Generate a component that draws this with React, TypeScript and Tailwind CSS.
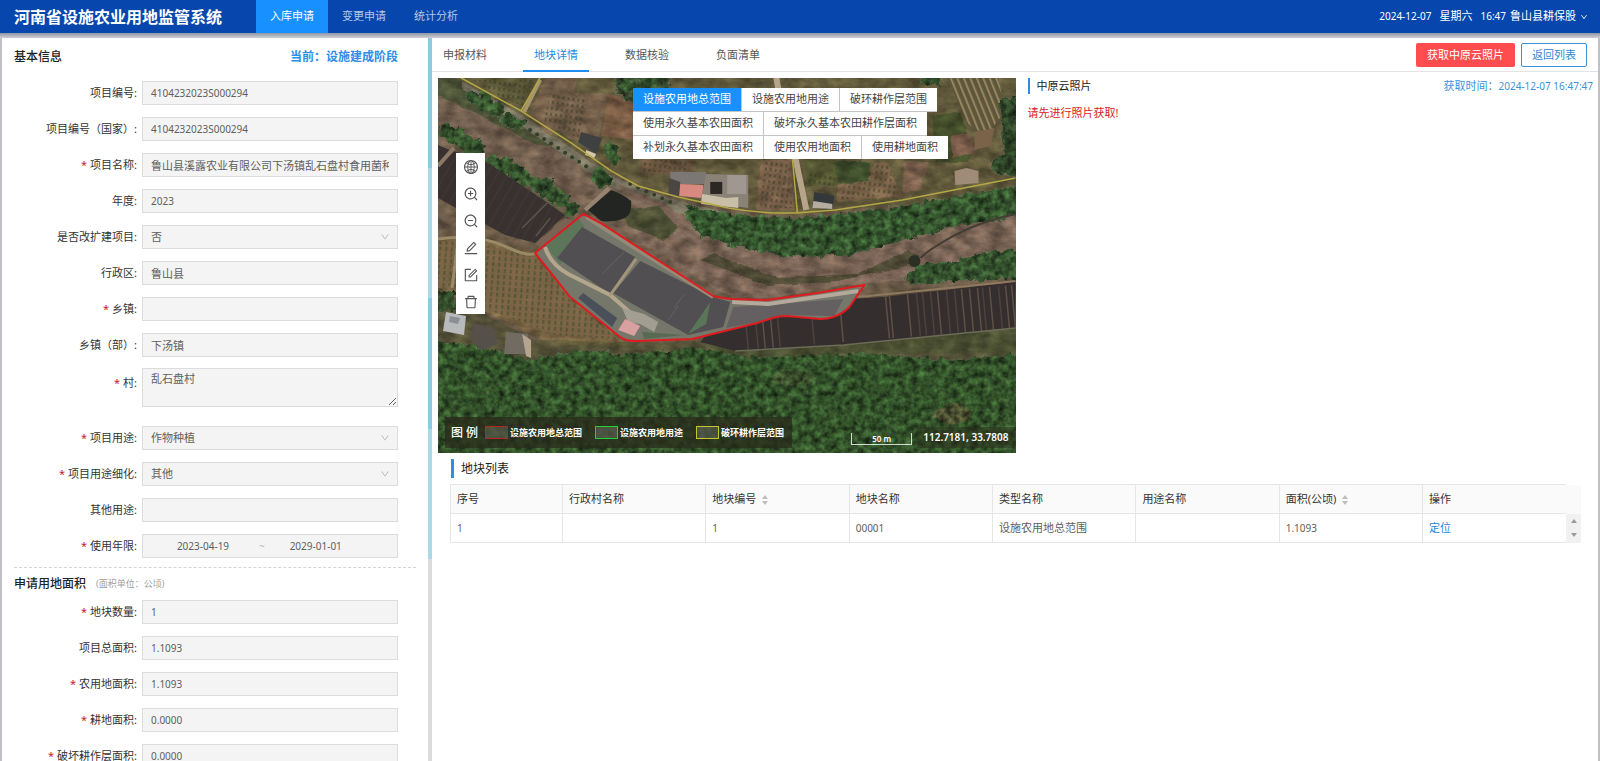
import React, { useId } from "react";
import {
  AiOutlineDelete,
  AiOutlineDown,
  AiOutlineEdit,
  AiOutlineForm,
  AiOutlineGlobal,
  AiOutlineZoomIn,
  AiOutlineZoomOut,
} from "react-icons/ai";

type FieldKind = "text" | "select" | "textarea";

interface FieldDef {
  label: string;
  value: string;
  required?: boolean;
  kind?: FieldKind;
  numeric?: boolean;
}

const basicFields: FieldDef[] = [
  { label: "项目编号", value: "4104232023S000294", numeric: true },
  { label: "项目编号（国家）", value: "4104232023S000294", numeric: true },
  { label: "项目名称", value: "鲁山县溪露农业有限公司下汤镇乱石盘村食用菌种植项目", required: true },
  { label: "年度", value: "2023", numeric: true },
  { label: "是否改扩建项目", value: "否", kind: "select" },
  { label: "行政区", value: "鲁山县" },
  { label: "乡镇", value: "", required: true },
  { label: "乡镇（部）", value: "下汤镇" },
];

const usageFields: FieldDef[] = [
  { label: "项目用途", value: "作物种植", required: true, kind: "select" },
  { label: "项目用途细化", value: "其他", required: true, kind: "select" },
  { label: "其他用途", value: "" },
];

const areaFields: FieldDef[] = [
  { label: "地块数量", value: "1", required: true, numeric: true },
  { label: "项目总面积", value: "1.1093", numeric: true },
  { label: "农用地面积", value: "1.1093", required: true, numeric: true },
  { label: "耕地面积", value: "0.0000", required: true, numeric: true },
  { label: "破坏耕作层面积", value: "0.0000", required: true, numeric: true },
];

function FieldLabel({ id, label, required }: { id: string; label: string; required?: boolean }) {
  return (
    <label htmlFor={id} className="w-[140px] shrink-0 pr-[5px] text-right text-[11px] leading-6 text-[#333]">
      {required && <span className="mr-[3px] text-[#c8202f]">*</span>}
      {label}:
    </label>
  );
}

function Field({ label, value, required, kind = "text", numeric }: FieldDef) {
  const id = useId();
  const size = numeric ? "text-[10px]" : "text-[11px]";
  const box = "w-full rounded-none border border-[#dcdcdc] bg-[#f4f4f4] px-2 text-[#606060] outline-none";
  return (
    <div className={kind === "textarea" ? "flex items-start" : "flex items-center"}>
      <div className={kind === "textarea" ? "flex pt-[3px]" : "flex"}>
        <FieldLabel id={id} label={label} required={required} />
      </div>
      <div className="relative flex min-w-0 flex-1">
        {kind === "text" && <input id={id} readOnly defaultValue={value} className={`${box} h-6 ${size}`} />}
        {kind === "textarea" && (
          <textarea id={id} readOnly defaultValue={value} className={`${box} h-[39px] resize py-0.5 leading-4 ${size}`} />
        )}
        {kind === "select" && (
          <>
            <select id={id} defaultValue={value} className={`${box} h-6 appearance-none ${size}`}>
              <option>{value}</option>
            </select>
            <AiOutlineDown className="pointer-events-none absolute top-[7px] right-2 size-[10px] text-[#b0b0b0]" />
          </>
        )}
      </div>
    </div>
  );
}

function DateRange() {
  return (
    <div className="flex items-center">
      <FieldLabel id="range-start" label="使用年限" required />
      <div className="flex h-6 min-w-0 flex-1 items-center border border-[#dcdcdc] bg-[#f4f4f4] text-[10px] text-[#606060]">
        <input id="range-start" readOnly defaultValue="2023-04-19" className="ml-1 w-28 bg-transparent text-center outline-none" />
        <span className="text-[#bbb]">~</span>
        <input aria-label="结束日期" readOnly defaultValue="2029-01-01" className="w-[102px] min-w-0 bg-transparent text-center outline-none" />
      </div>
    </div>
  );
}

function Header() {
  return (
    <header className="flex h-[33px] shrink-0 items-center bg-[#0747ad] pr-3 pl-[14px] text-white">
      <h1 className="w-[242px] text-[16px] leading-8 font-bold">河南省设施农业用地监管系统</h1>
      <nav className="flex h-full text-[11px]">
        <a href="#in" className="flex items-center bg-[#1890ff] px-3.5">入库申请</a>
        <a href="#change" className="flex items-center px-3.5 text-[#b4c8e6]">变更申请</a>
        <a href="#stat" className="flex items-center px-3.5 text-[#b4c8e6]">统计分析</a>
      </nav>
      <div className="ml-auto flex items-center text-[10px]">
        <span>2024-12-07</span>
        <span className="ml-2 text-[11px]">星期六</span>
        <span className="ml-2">16:47</span>
        <button className="ml-1 flex items-center gap-1 text-[11px]">
          鲁山县耕保股
          <AiOutlineDown className="size-2" />
        </button>
      </div>
    </header>
  );
}

function Sidebar() {
  return (
    <aside className="w-[426px] shrink-0 overflow-hidden bg-white">
      <div className="flex items-center justify-between pt-[9px] pr-[30px] pl-3 leading-5">
        <h2 className="text-[12px] font-medium text-[#222]">基本信息</h2>
        <span className="text-[12px] font-bold text-[#2d8ee8]">当前：设施建成阶段</span>
      </div>
      <form className="pt-[14px]">
        <div className="flex flex-col gap-3 pr-[30px]">
          {basicFields.map((f) => (
            <Field key={f.label} {...f} />
          ))}
        </div>
        <div className="pt-[11px] pr-[30px] pb-[19px]">
          <Field label="村" value="乱石盘村" required kind="textarea" />
        </div>
        <div className="flex flex-col gap-3 pr-[30px]">
          {usageFields.map((f) => (
            <Field key={f.label} {...f} />
          ))}
          <DateRange />
        </div>
        <div className="mt-[9px] mr-3 ml-3 border-t border-dashed border-[#d5d5d5]" />
        <div className="flex items-center gap-2.5 pt-[5px] pb-[5px] pl-3 leading-[22px]">
          <h2 className="text-[12px] font-medium text-[#222]">申请用地面积</h2>
          <span className="text-[9px] text-[#a0a0a0]">(面积单位：公顷)</span>
        </div>
        <div className="flex flex-col gap-3 pr-[30px]">
          {areaFields.map((f) => (
            <Field key={f.label} {...f} />
          ))}
        </div>
      </form>
    </aside>
  );
}

function Splitter() {
  return (
    <div className="flex w-1 shrink-0 flex-col bg-[#dcdcdc]">
      <div className="h-[130px] bg-[#8fcae2]" />
      <div className="h-[130px] bg-[#add8e6]" />
      <div className="h-[131px] bg-[#8fcae2]" />
      <div className="h-[130px] bg-[#add8e6]" />
    </div>
  );
}

const tabs = ["申报材料", "地块详情", "数据核验", "负面清单"];

function TabBar() {
  return (
    <div className="flex h-[34px] items-stretch border-b border-[#e3e3e3]">
      <div role="tablist" className="flex gap-[25px] text-[11px]">
        {tabs.map((t, i) => (
          <button
            key={t}
            role="tab"
            aria-selected={i === 1}
            className={
              i === 1
                ? "-mb-px border-b-2 border-[#1f8ef0] px-[11px] pt-[3px] text-[#2189e5]"
                : "-mb-px border-b-2 border-transparent px-[11px] pt-[3px] text-[#555]"
            }
          >
            {t}
          </button>
        ))}
      </div>
      <div className="ml-auto flex items-center gap-1.5 pt-px pr-[11px] text-[11px]">
        <button className="h-6 rounded-[2px] bg-[#ff4d4f] px-[11px] text-white">获取中原云照片</button>
        <button className="h-6 rounded-[2px] border border-[#3a8fd8] px-[10px] text-[#2f86d0]">返回列表</button>
      </div>
    </div>
  );
}

const siteOutline =
  "M145 136 L164 146 L275 218 Q282 220 294 221 L329 222 L379 215 L426 207 L411 229 Q404 236 395 239 Q389 241 382 241 L349 238 Q341 238 334 240 L319 245 L262 259 L254 261 L199 263 Q188 263 182 259 L132 219 L97 175 Z";

const greenhouseStripes = [
  306, 316, 323, 331, 338, 372, 401, 447, 451, 469, 478, 484, 492, 499, 508, 516, 523, 531, 539, 544, 551, 560, 567, 573,
];

function TreeLine({ points, r }: { points: number[][]; r: number }) {
  return (
    <g filter="url(#foliage)">
      {points.map(([x, y], i) => (
        <circle key={i} cx={x} cy={y} r={r + ((i * 7) % 4)} fill={i % 3 ? "#3a5a31" : "#304c2a"} />
      ))}
    </g>
  );
}

function SatelliteImage() {
  return (
    <svg
      viewBox="0 0 577 375"
      preserveAspectRatio="xMidYMid slice"
      className="absolute inset-0 size-full"
      role="img"
      aria-label="地块卫星影像"
    >
      <defs>
        <filter id="foliage" x="-5%" y="-5%" width="110%" height="110%" colorInterpolationFilters="sRGB">
          <feTurbulence type="fractalNoise" baseFrequency="0.15" numOctaves="3" seed="8" result="n" />
          <feDisplacementMap in="SourceGraphic" in2="n" scale="10" xChannelSelector="R" yChannelSelector="G" result="d" />
          <feColorMatrix in="n" values="0.8 0 0 0 0.08  0.8 0 0 0 0.08  0.8 0 0 0 0.08  0 0 0 0 1" result="g" />
          <feBlend in="g" in2="d" mode="overlay" result="b" />
          <feComposite in="b" in2="d" operator="in" />
        </filter>
        <filter id="soil" x="0" y="0" width="100%" height="100%" colorInterpolationFilters="sRGB">
          <feTurbulence type="fractalNoise" baseFrequency="0.06 0.1" numOctaves="5" seed="3" result="n" />
          <feDisplacementMap in="SourceGraphic" in2="n" scale="4" xChannelSelector="R" yChannelSelector="G" result="d" />
          <feColorMatrix in="n" values="0.4 0 0 0 0.29  0.4 0 0 0 0.29  0.4 0 0 0 0.29  0 0 0 0 1" result="g" />
          <feBlend in="g" in2="d" mode="overlay" result="b" />
          <feComposite in="b" in2="d" operator="in" />
        </filter>
        <pattern id="crop" width="5" height="6" patternUnits="userSpaceOnUse" patternTransform="rotate(8)">
          <rect x="1" y="1" width="2" height="3" fill="#2f3b1e" opacity=".55" />
        </pattern>
        <pattern id="orchard" width="6" height="6" patternUnits="userSpaceOnUse" patternTransform="rotate(4)">
          <rect width="6" height="6" fill="#7d6547" />
          <rect x="1" width="2" height="4" fill="#4f5430" />
        </pattern>
        <pattern id="rows" width="6" height="5" patternUnits="userSpaceOnUse" patternTransform="rotate(-22)">
          <rect width="6" height="5" fill="#5e5638" />
          <rect x="0" width="2" height="5" fill="#958563" />
        </pattern>
        <pattern id="shed" width="9" height="9" patternUnits="userSpaceOnUse" patternTransform="rotate(30)">
          <rect width="9" height="9" fill="#383130" />
          <rect width="1" height="9" fill="#403937" />
        </pattern>
      </defs>

      <g filter="url(#soil)">
        <rect x="-10" y="-10" width="600" height="400" fill="#6a5a47" />
        <path d="M-10 -10H590V118L464 126L357 138L240 122L173 96L83 38L20 0Z" fill="#625a3c" />
        <path d="M32 -10H98V0L82 30Z" fill="#5b5839" />
        <path d="M112 -10H142L128 44L110 60L92 36Z" fill="#735e49" />
        <path d="M113 15L170 16L160 62L134 62L105 42Z" fill="#75604b" />
        <path d="M170 16L194 22L196 62L163 58Z" fill="#7c5e46" />
        <path d="M205 82L252 80L256 96L200 96Z" fill="#6b5540" />
        <path d="M323 82L352 82L356 132L318 132Z" fill="#7a604b" />
        <path d="M366 82H405V108H370Z" fill="#545632" />
        <path d="M396 84H432L430 102L400 106Z" fill="#3f4f2c" />
        <path d="M436 84L450 86L463 118L398 124L399 108L430 102Z" fill="#7b6349" />
        <path d="M466 84H490L482 112L464 116Z" fill="#7b604d" />
        <path d="M494 38L520 34L536 68L530 84L496 84Z" fill="#46502c" />
        <path d="M512 58L532 54L536 74L514 80Z" fill="#765948" />
        <path d="M-8 16Q34 22 62 44L140 84L166 104L212 124L250 142L284 184L262 210L180 160L140 130L90 100L40 66L-8 42Z" fill="#73604f" />
        <path d="M-8 -8L20 0L60 30L120 70L96 66L40 36L-8 14Z" fill="#4c5236" />
        <path d="M24 4L82 37L132 69L172 98L240 124L290 134L240 136L176 110L130 80L78 44L22 10Z" fill="#77725f" />
        <path d="M180 106L226 126L276 156L345 179L409 177L475 159L590 132V178L512 192L465 202L405 207L329 221L290 218L200 162Z" fill="#7b6556" />
        <path d="M262 182L330 208L400 203L468 188L482 178L470 172L420 196L340 200L276 176Z" fill="#514d37" />
        <path d="M184 132L220 128L240 150L226 162L190 148Z" fill="#4f5236" />
        <path d="M-8 159L39 160L95 174L132 219L182 259L190 268L120 268L49 235L-8 212Z" fill="#7a6544" />
        <path d="M262 262L400 268L590 242V275L420 276L290 280Z" fill="#515637" />
        <path d="M-8 205L50 238L96 262L190 264L590 256V290H-8Z" fill="#4a4e31" opacity=".6" />
      </g>

      <path d="M34 2H96L84 28L60 18Z M112 16L150 18L140 60L106 44Z M324 84H350L354 130H322Z M438 86L450 88L460 116L400 122L402 110L432 102Z M206 82H250V94H204Z M368 96H396V108H370Z M4 168H20V208H4Z" fill="url(#crop)" />
      <path d="M0 163L16 162L12 208L0 210Z M20 163L96 177L131 221L180 261L120 257L50 232L14 208Z" fill="url(#orchard)" opacity=".85" />
      <path d="M508 0H560L566 34L548 58L530 46Z" fill="url(#rows)" />
      <path d="M536 54L556 50L552 68L536 72Z" fill="#7b6349" />
      <path d="M14 210L20 162M0 161Q40 156 66 168T97 175" fill="none" stroke="#9b8a66" strokeWidth="3" />

      {/* northern woodland belt */}
      <g filter="url(#foliage)">
        <path d="M246 126L290 136L357 140L400 136L464 128L590 106V136L520 148L475 160L409 177L345 179L290 166L262 158L250 142Z" fill="#36572f" />
        <path d="M466 200L480 186L512 184L545 174L590 170V200L520 204L470 206Z" fill="#36552f" />
        <path d="M176 -10H232V22L200 26L180 18Z" fill="#37492d" />
        <path d="M482 -10H508L500 8L484 6Z M560 20H590V100L558 96L552 84L566 76Z" fill="#2f4528" />
      </g>
      <TreeLine points={[[8, 52], [18, 58], [28, 66], [38, 70], [54, 84], [66, 88], [78, 96], [86, 100], [98, 106], [108, 110], [116, 118], [124, 122], [134, 130]]} r={7} />
      <TreeLine points={[[34, 20], [46, 24], [58, 32], [72, 42], [82, 46], [162, 98], [166, 102], [172, 72], [176, 80], [212, 0], [190, 8]]} r={6} />
      <g fill="#333f27">
        {[92, 99, 106, 113, 120, 127, 134, 141, 148, 192, 200, 208, 216, 224, 232].map((x) => (
          <circle key={x} cx={x} cy={x < 160 ? 52 + (x - 92) * 0.65 : 106 + (x - 192) * 0.45} r="2" />
        ))}
      </g>

      {/* southern hillside forest */}
      <g filter="url(#foliage)">
        <path d="M-10 262L40 268L92 282L140 272L192 276L262 270L312 279L429 276L520 282L600 272V400H-10Z" fill="#34542b" />
        <path d="M-10 212L16 214L20 232L-10 236Z" fill="#344d2b" />
        <ellipse cx="514" cy="336" rx="18" ry="10" fill="#4f5433" />
        <ellipse cx="355" cy="300" rx="22" ry="8" fill="#40552f" />
      </g>

      {/* upper-left greenhouses */}
      <path d="M0 67L12 72L47 83L107 123L127 137L97 165L67 157L0 120Z" fill="url(#shed)" />
      <path d="M0 88L16 70" stroke="#8c7a66" strokeWidth="4" fill="none" />
      <path d="M84 150L110 124M98 158L112 140" stroke="#5f544d" strokeWidth="1.5" fill="none" />
      <path d="M97 166L127 140L136 144L104 170Z" fill="#7a6254" />

      <path d="M173 112Q184 116 193 123Q194 136 187 140Q174 145 163 143L150 132Z" fill="#222522" />
      <path d="M147 132L171 110" stroke="#95846f" strokeWidth="4" />

      {/* right-hand greenhouse rows */}
      <path d="M292 229L330 226L445 219L577 204V250L405 267L297 273L262 264Z" fill="#352e2f" />
      {greenhouseStripes.map((x) => (
        <path
          key={x}
          d={`M${x} ${229 - (x - 300) * 0.08}L${x + 4} ${272 - (x - 300) * 0.08}`}
          stroke={x % 2 ? "#5f5044" : "#4d423d"}
          strokeWidth="1.5"
        />
      ))}
      <path d="M294 226L430 218L510 210L577 203" stroke="#8f7a60" strokeWidth="2" fill="none" />
      <path d="M297 273L405 267L577 250" stroke="#6c6b56" strokeWidth="1.5" fill="none" />

      {/* buildings */}
      <path d="M232 94H268V106H232Z" fill="#7b7774" />
      <path d="M231 100L242 104V119H230Z" fill="#4b4643" />
      <path d="M242 106L265 107L264 120L241 118Z" fill="#d98a80" />
      <path d="M268 96L310 97V130L262 124Z" fill="#8a8177" />
      <path d="M272 104H284V116H272Z" fill="#2a2725" />
      <path d="M289 97H308V116H289Z" fill="#a09890" />
      <path d="M264 116L288 120L300 119V130L263 126Z" fill="#c9bfa9" />
      <path d="M143 54L164 60L158 76L140 64Z" fill="#3f4042" />
      <path d="M148 72L158 76L156 80L147 77Z" fill="#d3c7b2" />
      <path d="M376 114L396 118L394 132L374 128Z" fill="#34383a" />
      <path d="M375 123L394 126V131L374 130Z" fill="#b5aca0" />
      <path d="M516 93L528 90L540 93V105L517 107Z" fill="#a08b79" />
      <path d="M8 234L28 238L26 257L5 253Z" fill="#b9babb" />
      <path d="M12 238L22 240L20 246L11 244Z" fill="#8b8f96" />
      <path d="M36 245L56 250L60 266L44 272L32 260Z" fill="#55514a" />
      <path d="M68 254L90 256L92 276L66 276Z" fill="#716b62" />
      <path d="M84 256L93 262L93 280L88 278Z" fill="#b4a58f" />

      {/* project site */}
      <path d={siteOutline} fill="#75776a" />
      <path d="M140 140L108 168L122 186L146 148Z" fill="#5d7558" />
      <path d="M144 149L197 179L172 216L119 180Z" fill="#514f51" />
      <path d="M202 183L275 219L292 224L285 249L250 257L175 215Z" fill="#514f51" />
      <path d="M295 229L405 221L396 238L349 237L319 244L288 250Z" fill="#646061" />
      <path d="M164 196L186 174M236 230L246 216M230 242L240 228" stroke="#625f60" strokeWidth="1" />
      <path d="M148 139L200 172L275 219" fill="none" stroke="#958977" strokeWidth="4" />
      <path d="M107 169Q112 186 130 196L172 217L196 238" fill="none" stroke="#b3a68c" strokeWidth="4" />
      <path d="M172 217L198 181" stroke="#a2957b" strokeWidth="3" />
      <path d="M145 215L179 240L174 249L140 220Z" fill="#4a505a" />
      <path d="M184 230L206 236L220 244L216 254L202 246L190 244Z" fill="#a39e92" />
      <path d="M187 241L202 248L196 258L180 252Z" fill="#d9a0a0" />
      <path d="M250 256L272 224L268 246Z" fill="#5a7557" />
      <path d="M204 254L246 257L206 261Z" fill="#566b51" />
      <path d="M294 224L330 226L420 213" fill="none" stroke="#b4a99a" strokeWidth="4" />
      <path d={siteOutline} fill="none" stroke="#e01b1f" strokeWidth="2" strokeLinejoin="round" />

      {/* roads and administrative lines */}
      <path d="M338 0L343 28M357 80L368 132" stroke="#b6a58b" strokeWidth="6" />
      <path d="M102 2L86 34" stroke="#a8956c" strokeWidth="4" />
      <path d="M577 136Q540 144 515 158T482 180" fill="none" stroke="#453d34" strokeWidth="2" />
      <circle cx="476" cy="183" r="6" fill="#2b2f24" />
      <path d="M23 0L83 33L133 65L173 93L200 108L240 119L290 130Q324 136 357 135L397 132L464 122L577 100M102 0L83 33M354 80L359 134" fill="none" stroke="#b3a844" strokeWidth="1.5" />
    </svg>
  );
}

const layerRows = [
  ["设施农用地总范围", "设施农用地用途", "破环耕作层范围"],
  ["使用永久基本农田面积", "破坏永久基本农田耕作层面积"],
  ["补划永久基本农田面积", "使用农用地面积", "使用耕地面积"],
];

const tools = [
  { name: "全图", Icon: AiOutlineGlobal },
  { name: "放大", Icon: AiOutlineZoomIn },
  { name: "缩小", Icon: AiOutlineZoomOut },
  { name: "绘制", Icon: AiOutlineEdit },
  { name: "编辑", Icon: AiOutlineForm },
  { name: "删除", Icon: AiOutlineDelete },
];

const legend = [
  { label: "设施农用地总范围", swatch: "border-[#b3261a]" },
  { label: "设施农用地用途", swatch: "border-[#1fd038]" },
  { label: "破环耕作层范围", swatch: "border-[#c8c52c]" },
];

function MapView() {
  return (
    <div className="relative h-[375px] w-1/2 overflow-hidden">
      <SatelliteImage />
      <div className="absolute top-[10px] left-[195px] flex flex-col items-start text-[11px] text-[#444]">
        {layerRows.map((row, r) => (
          <div key={r} className="flex gap-px border-b border-[#c4c4c4] bg-[#c4c4c4] last:border-b-0">
            {row.map((name, i) => (
              <button
                key={name}
                className={
                  r === 0 && i === 0
                    ? "h-[23px] bg-[#1890ff] px-[10px] whitespace-nowrap text-white"
                    : "h-[23px] bg-white px-[10px] whitespace-nowrap"
                }
              >
                {name}
              </button>
            ))}
          </div>
        ))}
      </div>
      <div className="absolute top-[75px] left-[18px] flex w-[29px] flex-col gap-px bg-white text-[#555]">
        {tools.map(({ name, Icon }) => (
          <button key={name} aria-label={name} className="flex h-[26px] items-center justify-center pt-0.5">
            <Icon className="size-4" />
          </button>
        ))}
      </div>
      <div className="absolute bottom-[5px] left-[7px] flex h-[31px] items-center bg-[#2a2b1c]/75 pr-2 pl-1.5 font-bold text-white">
        <span className="w-[34px] text-[12px] font-medium">图 例</span>
        <div className="flex gap-[13px] text-[9px]">
          {legend.map((l) => (
            <span key={l.label} className="flex items-center gap-0.5">
              <i className={`h-[13px] w-[23px] border bg-white/15 ${l.swatch}`} />
              {l.label}
            </span>
          ))}
        </div>
      </div>
      <div className="absolute right-px bottom-[5px] flex items-end gap-[5px] text-white">
        <div className="mb-[3px] flex h-3 w-[61px] items-center justify-center border-x border-b border-white/80 text-[8px] font-semibold">
          50 m
        </div>
        <div className="bg-[#2a2b1c]/50 px-1.5 text-[10px] leading-[21px] font-semibold">112.7181, 33.7808</div>
      </div>
    </div>
  );
}

function PhotoPanel() {
  return (
    <section className="w-1/2 pl-3">
      <div className="flex items-center justify-between leading-4">
        <h3 className="border-l-2 border-[#2d8ee8] pl-[7px] text-[11px] text-[#222]">中原云照片</h3>
        <p className="text-[11px] text-[#3a93d8]">
          获取时间：<span className="text-[10px]">2024-12-07 16:47:47</span>
        </p>
      </div>
      <p className="pt-[11px] text-[11px] leading-4 text-[#d9201b]">请先进行照片获取!</p>
    </section>
  );
}

function Sorter() {
  return (
    <svg viewBox="0 0 6 10" className="ml-1.5 inline-block h-2.5 w-1.5 align-middle" fill="#bdbdbd">
      <path d="M3 0L6 4H0Z M3 10L0 6H6Z" />
    </svg>
  );
}

const columns = [
  { title: "序号" },
  { title: "行政村名称" },
  { title: "地块编号", sort: true },
  { title: "地块名称" },
  { title: "类型名称" },
  { title: "用途名称" },
  { title: "面积(公顷)", sort: true },
  { title: "操作" },
];

const plot = ["1", "", "1", "00001", "设施农用地总范围", "", "1.1093"];

function PlotTable() {
  return (
    <section className="pt-1.5 pr-3 pl-3">
      <h3 className="ml-px border-l-3 border-[#2d8ee8] pl-[7px] text-[12px] leading-[19px] text-[#222]">地块列表</h3>
      <table className="mt-1.5 w-full table-fixed border-collapse text-left text-[11px]">
        <colgroup>
          <col className="w-28" />
          <col span={7} />
          <col className="w-[15px]" />
        </colgroup>
        <thead>
          <tr className="h-[29px] bg-[#fafafa] text-[#333]">
            {columns.map((c, i) => (
              <th
                key={c.title}
                className={
                  i === 7
                    ? "border-y border-l border-[#e6e6e6] px-[6px] font-normal"
                    : "border border-[#e6e6e6] px-[6px] font-normal"
                }
              >
                {c.title}
                {c.sort && <Sorter />}
              </th>
            ))}
            <th aria-label="滚动" />
          </tr>
        </thead>
        <tbody>
          <tr className="h-[29px] text-[#606060]">
            {plot.map((v, i) => (
              <td
                key={i}
                className={
                  i === 4
                    ? "border border-[#e6e6e6] px-[6px]"
                    : "border border-[#e6e6e6] px-[6px] text-[10px]"
                }
              >
                {v}
              </td>
            ))}
            <td className="border-b border-l border-[#e6e6e6] px-[6px]">
              <a href="#locate" className="text-[#2189d5]">定位</a>
            </td>
            <td className="bg-[#f1f1f1]">
              <svg viewBox="0 0 6 18" className="mx-auto h-[18px] w-1.5" fill="#9a9a9a">
                <path d="M3 0L6 4H0Z M3 18L0 14H6Z" />
              </svg>
            </td>
          </tr>
        </tbody>
      </table>
    </section>
  );
}

export default function App() {
  return (
    <div className="flex h-screen flex-col overflow-hidden bg-[#bfc1c4] font-['Noto_Sans','Noto_Sans_CJK_SC',sans-serif]">
      <Header />
      <div className="h-[5px] shrink-0 bg-linear-to-b from-[#8d96a6] to-[#d0d0d2]" />
      <div className="flex min-h-0 flex-1 pr-0.5 pl-0.5">
        <Sidebar />
        <Splitter />
        <main className="min-w-0 flex-1 bg-white">
          <TabBar />
          <div className="pt-1.5 pr-[5px] pl-1.5">
            <div className="flex">
              <MapView />
              <PhotoPanel />
            </div>
            <PlotTable />
          </div>
        </main>
      </div>
    </div>
  );
}
